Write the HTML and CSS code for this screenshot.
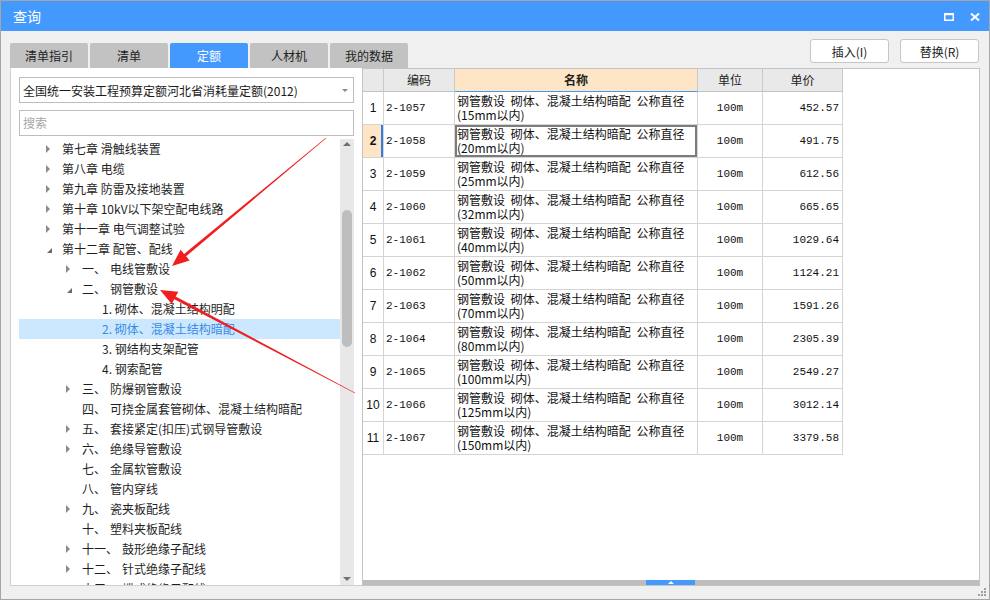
FILE: index.html
```html
<!DOCTYPE html>
<html lang="zh-CN">
<head>
<meta charset="utf-8">
<title>查询</title>
<link rel="stylesheet" href="styles.css">
</head>
<body>
<div class="window">
  <div class="titlebar">
    <span class="title">查询</span>
    <div class="win-ctrls">
      <svg width="10" height="8" viewBox="0 0 10 8"><rect x="0.75" y="0.75" width="8.5" height="6.5" fill="none" stroke="#fff" stroke-width="1.5"/><rect x="0" y="0" width="10" height="2.2" fill="#fff"/></svg>
      <svg width="10" height="8" viewBox="0 0 10 8"><path d="M1 0.5 L9 7.5 M9 0.5 L1 7.5" stroke="#fff" stroke-width="2"/></svg>
    </div>
  </div>
  <div class="toolbar">
    <div class="tabs">
      <div class="tab">清单指引</div>
      <div class="tab">清单</div>
      <div class="tab active">定额</div>
      <div class="tab">人材机</div>
      <div class="tab">我的数据</div>
    </div>
    <div class="actions">
      <button class="btn">插入(I)</button>
      <button class="btn">替换(R)</button>
    </div>
  </div>
  <div class="main">
    <div class="left">
      <div class="select"><span>全国统一安装工程预算定额河北省消耗量定额(2012)</span><i class="caret"></i></div>
      <div class="search">搜索</div>
      <div class="tree">
        <div class="tree-list">
          <div class="row l0"><i class="tw c"></i><span>第七章 滑触线装置</span></div>
          <div class="row l0"><i class="tw c"></i><span>第八章 电缆</span></div>
          <div class="row l0"><i class="tw c"></i><span>第九章 防雷及接地装置</span></div>
          <div class="row l0"><i class="tw c"></i><span>第十章 10kV以下架空配电线路</span></div>
          <div class="row l0"><i class="tw c"></i><span>第十一章 电气调整试验</span></div>
          <div class="row l0"><i class="tw e"></i><span>第十二章 配管、配线</span></div>
          <div class="row l1"><i class="tw c"></i><span class="no">一、</span><span>电线管敷设</span></div>
          <div class="row l1"><i class="tw e"></i><span class="no">二、</span><span>钢管敷设</span></div>
          <div class="row l2"><i class="tw"></i><span>1. 砌体、混凝土结构明配</span></div>
          <div class="row l2 sel"><i class="tw"></i><span>2. 砌体、混凝土结构暗配</span></div>
          <div class="row l2"><i class="tw"></i><span>3. 钢结构支架配管</span></div>
          <div class="row l2"><i class="tw"></i><span>4. 钢索配管</span></div>
          <div class="row l1"><i class="tw c"></i><span class="no">三、</span><span>防爆钢管敷设</span></div>
          <div class="row l1"><i class="tw"></i><span class="no">四、</span><span>可挠金属套管砌体、混凝土结构暗配</span></div>
          <div class="row l1"><i class="tw c"></i><span class="no">五、</span><span>套接紧定(扣压)式钢导管敷设</span></div>
          <div class="row l1"><i class="tw c"></i><span class="no">六、</span><span>绝缘导管敷设</span></div>
          <div class="row l1"><i class="tw"></i><span class="no">七、</span><span>金属软管敷设</span></div>
          <div class="row l1"><i class="tw"></i><span class="no">八、</span><span>管内穿线</span></div>
          <div class="row l1"><i class="tw c"></i><span class="no">九、</span><span>瓷夹板配线</span></div>
          <div class="row l1"><i class="tw"></i><span class="no">十、</span><span>塑料夹板配线</span></div>
          <div class="row l1"><i class="tw c"></i><span class="no">十一、</span><span>鼓形绝缘子配线</span></div>
          <div class="row l1"><i class="tw c"></i><span class="no">十二、</span><span>针式绝缘子配线</span></div>
          <div class="row l1"><i class="tw c"></i><span class="no">十三、</span><span>蝶式绝缘子配线</span></div>
        </div>
        <div class="vscroll">
          <div class="sarrow up"></div>
          <div class="thumb"></div>
          <div class="sarrow down"></div>
        </div>
      </div>
    </div>
    <div class="right">
      <div class="grid">
        <div class="hd"></div>
        <div class="hd">编码</div>
        <div class="hd hd-sel">名称</div>
        <div class="hd">单位</div>
        <div class="hd">单价</div>

        <div class="cell num">1</div><div class="cell code">2-1057</div><div class="cell name">钢管敷设 砌体、混凝土结构暗配 公称直径<br>(15mm以内)</div><div class="cell unit">100m</div><div class="cell price">452.57</div>
        <div class="cell num num-sel">2</div><div class="cell code">2-1058</div><div class="cell name name-sel">钢管敷设 砌体、混凝土结构暗配 公称直径<br>(20mm以内)</div><div class="cell unit">100m</div><div class="cell price">491.75</div>
        <div class="cell num">3</div><div class="cell code">2-1059</div><div class="cell name">钢管敷设 砌体、混凝土结构暗配 公称直径<br>(25mm以内)</div><div class="cell unit">100m</div><div class="cell price">612.56</div>
        <div class="cell num">4</div><div class="cell code">2-1060</div><div class="cell name">钢管敷设 砌体、混凝土结构暗配 公称直径<br>(32mm以内)</div><div class="cell unit">100m</div><div class="cell price">665.65</div>
        <div class="cell num">5</div><div class="cell code">2-1061</div><div class="cell name">钢管敷设 砌体、混凝土结构暗配 公称直径<br>(40mm以内)</div><div class="cell unit">100m</div><div class="cell price">1029.64</div>
        <div class="cell num">6</div><div class="cell code">2-1062</div><div class="cell name">钢管敷设 砌体、混凝土结构暗配 公称直径<br>(50mm以内)</div><div class="cell unit">100m</div><div class="cell price">1124.21</div>
        <div class="cell num">7</div><div class="cell code">2-1063</div><div class="cell name">钢管敷设 砌体、混凝土结构暗配 公称直径<br>(70mm以内)</div><div class="cell unit">100m</div><div class="cell price">1591.26</div>
        <div class="cell num">8</div><div class="cell code">2-1064</div><div class="cell name">钢管敷设 砌体、混凝土结构暗配 公称直径<br>(80mm以内)</div><div class="cell unit">100m</div><div class="cell price">2305.39</div>
        <div class="cell num">9</div><div class="cell code">2-1065</div><div class="cell name">钢管敷设 砌体、混凝土结构暗配 公称直径<br>(100mm以内)</div><div class="cell unit">100m</div><div class="cell price">2549.27</div>
        <div class="cell num">10</div><div class="cell code">2-1066</div><div class="cell name">钢管敷设 砌体、混凝土结构暗配 公称直径<br>(125mm以内)</div><div class="cell unit">100m</div><div class="cell price">3012.14</div>
        <div class="cell num">11</div><div class="cell code">2-1067</div><div class="cell name">钢管敷设 砌体、混凝土结构暗配 公称直径<br>(150mm以内)</div><div class="cell unit">100m</div><div class="cell price">3379.58</div>
      </div>
      <div class="hbar"><div class="hthumb"><i class="hup"></i></div></div>
    </div>
  </div>
  <div class="statusbar">
    <svg class="grip" width="10" height="9" viewBox="0 0 10 9">
      <rect x="6" y="0" width="2" height="2" fill="#a0a0a0"/>
      <rect x="3" y="3" width="2" height="2" fill="#a0a0a0"/>
      <rect x="6" y="3" width="2" height="2" fill="#a0a0a0"/>
      <rect x="0" y="6" width="2" height="2" fill="#a0a0a0"/>
      <rect x="3" y="6" width="2" height="2" fill="#a0a0a0"/>
      <rect x="6" y="6" width="2" height="2" fill="#a0a0a0"/>
    </svg>
  </div>
  <svg class="annot" width="990" height="600" viewBox="0 0 990 600">
    <polygon points="326.2,138.2 186.1,256.3 189.6,260.5 172,266 180.6,249.7 184.1,253.9 325.8,137.8" fill="#f01e1e"/>
    <polygon points="355.1,392.7 175.7,296.5 178.3,291.7 160,290 171.7,304.1 174.3,299.3 354.9,393.3" fill="#f01e1e"/>
  </svg>
</div>
</body>
</html>
```

FILE: styles.css
```css
* { box-sizing: border-box; }
html, body { margin: 0; padding: 0; }
body {
  width: 990px;
  height: 600px;
  overflow: hidden;
  font-family: "Noto Sans CJK SC", "Noto Sans", sans-serif;
  font-size: 12px;
  color: #1f1f1f;
  background: #fff;
}
.window {
  position: relative;
  width: 990px;
  height: 600px;
  border: 1px solid #a6a6a6;
  background: #f0f0f0;
  display: flex;
  flex-direction: column;
}
.titlebar {
  height: 30px;
  flex: none;
  background: #4499ff;
  display: flex;
  align-items: center;
  justify-content: space-between;
  padding: 0 9px 0 12px;
  color: #fff;
}
.title { font-size: 14px; line-height: 30px; }
.win-ctrls { display: flex; align-items: center; gap: 16px; margin-top: 1px; }
.win-ctrls svg { display: block; }

.toolbar {
  height: 37px;
  flex: none;
  display: flex;
  justify-content: space-between;
  padding: 0 10px 0 9px;
}
.tabs { display: flex; gap: 2px; align-self: flex-end; }
.tab {
  width: 78px;
  height: 25px;
  background: #c2c2c2;
  border-radius: 2px 2px 0 0;
  text-align: center;
  line-height: 25px;
  color: #1e1e1e;
}
.tab.active { background: #4499ff; color: #fff; }
.actions { display: flex; gap: 11px; margin-top: 8px; }
.btn {
  width: 79px;
  height: 24px;
  background: #fff;
  border: 1px solid #c6c6c6;
  border-radius: 3px;
  font: inherit;
  color: #222;
  padding: 0;
}

.main { height: 518px; flex: none; display: flex; padding: 0 9px; }
.left {
  width: 352px;
  flex: none;
  background: #fff;
  border: 1px solid #cfcfcf;
  border-right: none;
  border-top-color: #ffffff;
  display: flex;
  flex-direction: column;
  padding: 8px 8px 0 8px;
}
.select {
  height: 26px;
  flex: none;
  border: 1px solid #bdbdbd;
  display: flex;
  align-items: center;
  justify-content: space-between;
  padding: 0 5px 0 3px;
  color: #1a1a1a;
}
.caret {
  width: 0;
  height: 0;
  border-top: 3px solid #8a8a8a;
  border-left: 3px solid transparent;
  border-right: 3px solid transparent;
}
.search {
  height: 26px;
  flex: none;
  margin-top: 7px;
  border: 1px solid #bdbdbd;
  padding-left: 3px;
  line-height: 24px;
  color: #a6a6a6;
}
.tree { flex: 1; min-height: 0; margin-top: 3px; display: flex; overflow: hidden; }
.tree-list { flex: 1; overflow: hidden; }
.row {
  height: 20px;
  line-height: 20px;
  display: flex;
  align-items: center;
  white-space: nowrap;
  color: #1f1f1f;
}
.row.l0 { padding-left: 23px; }
.row.l1 { padding-left: 43px; }
.row.l2 { padding-left: 63px; }
.row.sel { background: #cce8ff; color: #3a8ae6; }
.tw {
  width: 12px;
  height: 20px;
  margin-right: 8px;
  flex: none;
  display: flex;
  align-items: center;
  justify-content: center;
}
.tw.c::before {
  content: "";
  border-left: 4px solid #8c8c8c;
  border-top: 4px solid transparent;
  border-bottom: 4px solid transparent;
}
.tw.e::before {
  content: "";
  border-bottom: 5px solid #6b6b6b;
  border-left: 5px solid transparent;
  transform: translate(1px, 1px);
}
.no { margin-right: 4px; }

.vscroll {
  width: 14px;
  flex: none;
  background: #e8e8e8;
  display: flex;
  flex-direction: column;
  align-items: center;
}
.sarrow { width: 14px; height: 10px; display: flex; align-items: center; justify-content: center; flex: none; }
.sarrow.up::before {
  content: "";
  border-bottom: 4px solid #707070;
  border-left: 4px solid transparent;
  border-right: 4px solid transparent;
}
.sarrow.down { margin-top: auto; height: 12px; }
.sarrow.down::before {
  content: "";
  border-top: 4px solid #707070;
  border-left: 4px solid transparent;
  border-right: 4px solid transparent;
}
.thumb {
  width: 10px;
  height: 137px;
  margin-top: 61px;
  border-radius: 5px;
  background: #bebebe;
  flex: none;
}

.right {
  flex: 1;
  background: #fff;
  border: 1px solid #c4c4c4;
  display: flex;
  flex-direction: column;
  min-width: 0;
}
.grid {
  display: grid;
  grid-template-columns: 21px 71px 243px 65px 80px;
  grid-template-rows: 23px;
  grid-auto-rows: 33px;
  width: 480px;
}
.hd {
  background: #e9e9e9;
  border-right: 1px solid #c9c9c9;
  border-bottom: 1px solid #c2c2c2;
  text-align: center;
  line-height: 22px;
  color: #222;
  font-size: 12px;
}
.hd-sel {
  background: #fde5c6;
  font-weight: bold;
  border-bottom: 1px solid #4796f2;
}
.cell {
  border-right: 1px solid #d4d4d4;
  border-bottom: 1px solid #d4d4d4;
  display: flex;
  align-items: center;
  line-height: 14px;
  color: #111;
  white-space: nowrap;
  overflow: hidden;
}
.cell.num { justify-content: center; font-family: "Liberation Sans", sans-serif; font-size: 12px; }
.cell.num-sel { background: #fde5c6; font-weight: bold; box-shadow: inset -2px 0 0 #2d7fe6; }
.cell.code { padding-left: 2px; font-family: "Liberation Mono", monospace; font-size: 11px; }
.cell.name { padding-left: 2px; word-spacing: 3px; }
.cell.name-sel { box-shadow: inset 0 0 0 2px #7c7c7c; }
.cell.unit { justify-content: center; font-family: "Liberation Mono", monospace; font-size: 11px; }
.cell.price { justify-content: flex-end; padding-right: 3px; font-family: "Liberation Mono", monospace; font-size: 11px; }

.hbar {
  margin-top: auto;
  height: 5px;
  flex: none;
  background: #bdbdbd;
  padding-left: 283px;
}
.hthumb {
  width: 49px;
  height: 5px;
  background: #4499ff;
  display: flex;
  align-items: center;
  justify-content: center;
}
.hup {
  width: 0;
  height: 0;
  border-bottom: 3px solid #fff;
  border-left: 3px solid transparent;
  border-right: 3px solid transparent;
}

.statusbar {
  flex: 1;
  display: flex;
  justify-content: flex-end;
  align-items: flex-end;
  padding: 0 1px 2px 0;
}
.grip { display: block; }

.annot {
  position: absolute;
  left: -1px;
  top: -1px;
  pointer-events: none;
}
```
